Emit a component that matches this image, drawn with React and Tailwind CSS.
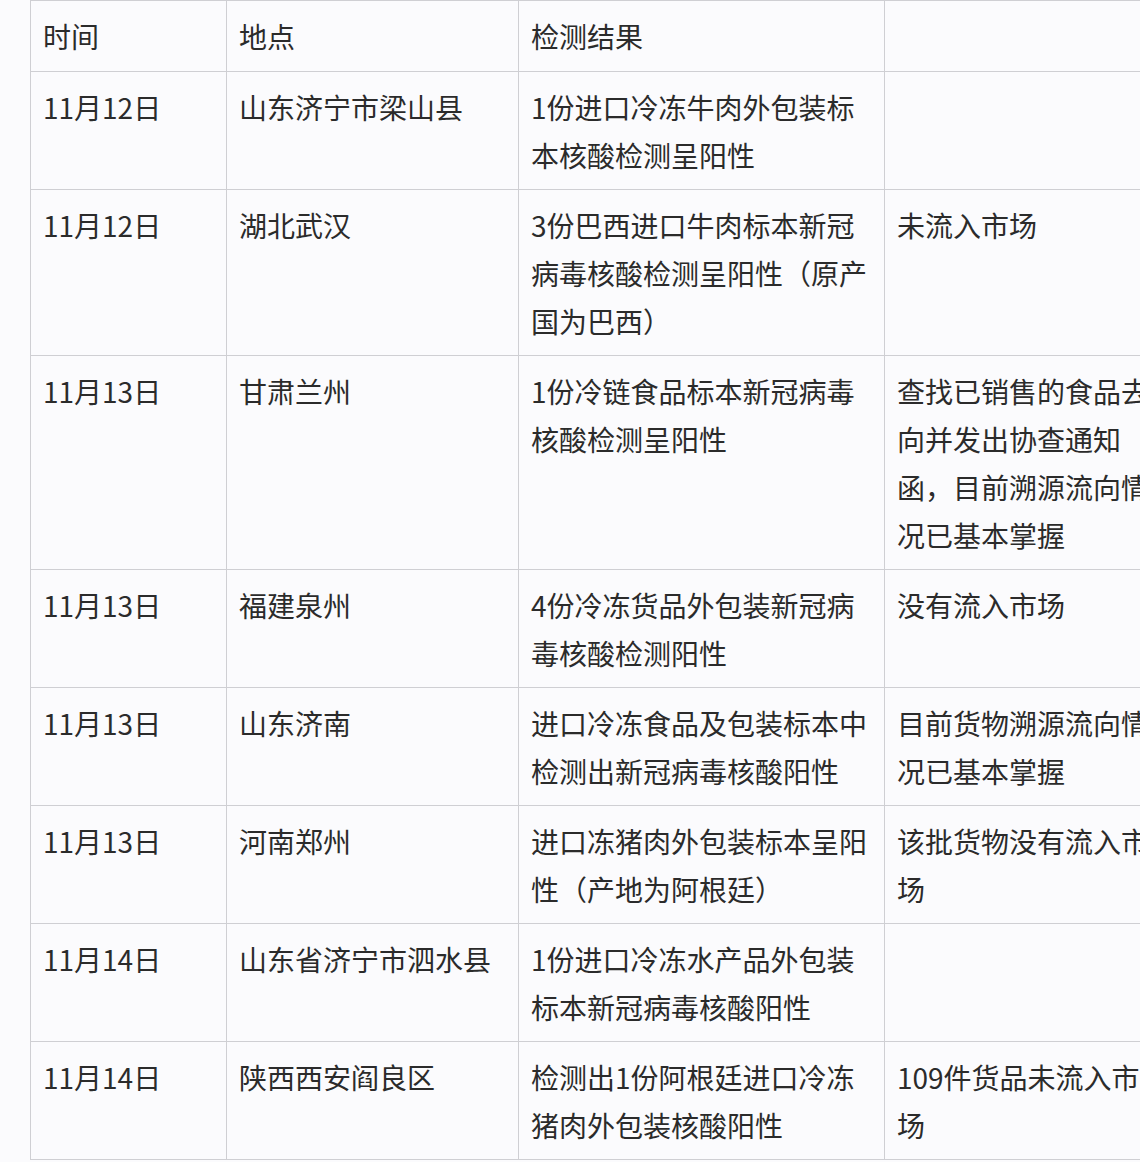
import React from "react";

const rows = [
  ["11月12日", "山东济宁市梁山县", "1份进口冷冻牛肉外包装标本核酸检测呈阳性", ""],
  ["11月12日", "湖北武汉", "3份巴西进口牛肉标本新冠病毒核酸检测呈阳性（原产国为巴西）", "未流入市场"],
  ["11月13日", "甘肃兰州", "1份冷链食品标本新冠病毒核酸检测呈阳性", "查找已销售的食品去向并发出协查通知函，目前溯源流向情况已基本掌握"],
  ["11月13日", "福建泉州", "4份冷冻货品外包装新冠病毒核酸检测阳性", "没有流入市场"],
  ["11月13日", "山东济南", "进口冷冻食品及包装标本中检测出新冠病毒核酸阳性", "目前货物溯源流向情况已基本掌握"],
  ["11月13日", "河南郑州", "进口冻猪肉外包装标本呈阳性（产地为阿根廷）", "该批货物没有流入市场"],
  ["11月14日", "山东省济宁市泗水县", "1份进口冷冻水产品外包装标本新冠病毒核酸阳性", ""],
  ["11月14日", "陕西西安阎良区", "检测出1份阿根廷进口冷冻猪肉外包装核酸阳性", "109件货品未流入市场"],
];

const cell = "border border-[#cfcfd3] pl-[12px] pr-[14px] pt-[11px] pb-[10px] align-top text-left font-normal";
const head = "border border-[#cfcfd3] pl-[12px] pr-[14px] pt-[11px] pb-[11px] align-top text-left font-normal";

const App = () => {
  return (
    <div
      className="w-[1140px] h-[1162px] overflow-hidden bg-[#fbfbfd] pl-[30px] text-[#2b2b2b] text-[28px] leading-[48px]"
      style={{ fontFamily: '"Noto Sans CJK SC", "Noto Sans", sans-serif' }}
    >
      <table className="table-fixed border-collapse w-[1140px]">
        <colgroup>
          <col className="w-[196px]" />
          <col className="w-[292px]" />
          <col className="w-[366px]" />
          <col className="w-[286px]" />
        </colgroup>
        <thead>
          <tr>
            <th className={head}>时间</th>
            <th className={head}>地点</th>
            <th className={head}>检测结果</th>
            <th className={head}></th>
          </tr>
        </thead>
        <tbody>
          {rows.map((r, i) => (
            <tr key={i}>
              {r.map((c, j) => (
                <td key={j} className={cell}>
                  {c}
                </td>
              ))}
            </tr>
          ))}
        </tbody>
      </table>
    </div>
  );
};

export default App;
